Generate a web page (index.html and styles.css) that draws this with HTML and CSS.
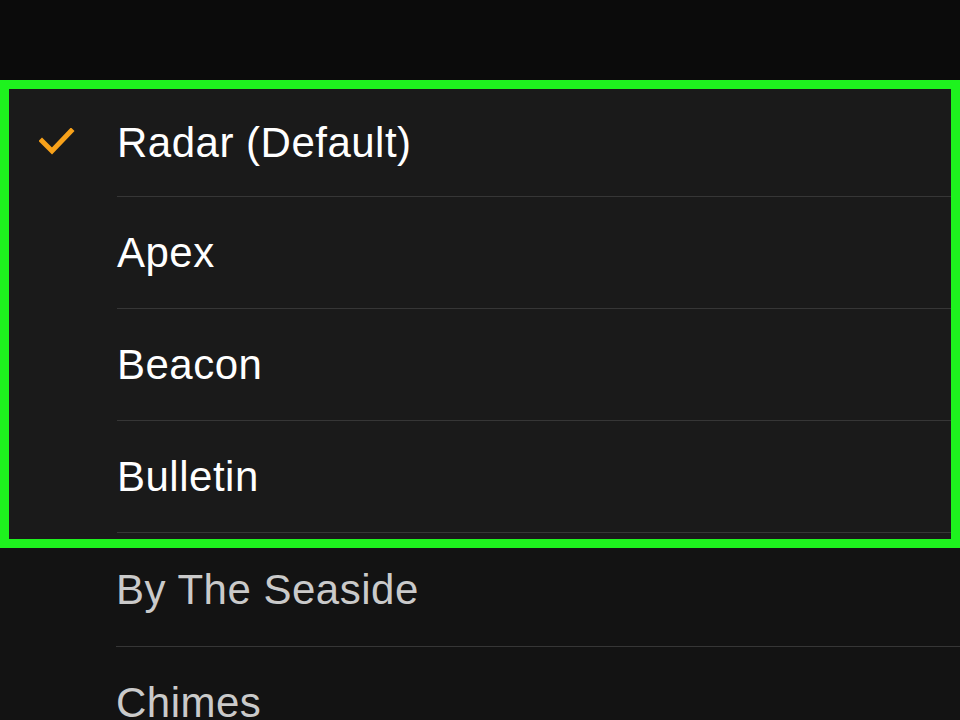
FILE: index.html
```html
<!DOCTYPE html>
<html lang="en">
<head>
    <meta http-equiv="Content-Type" content="text/html; charset=UTF-8">
    <meta name="viewport" content="width=device-width, initial-scale=1.0">
    <title>Ringtones</title>
    <link rel="stylesheet" href="styles.css">
</head>
<body>
    <div class="topbar"></div>
    <div class="highlight">
        <div class="row row-first">
            <div class="row-icon">
                <svg width="36" height="30" viewBox="0 0 36 30">
                    <polyline points="3,13 13,23 32,3" fill="none" stroke="#f7a11a" stroke-width="5" stroke-linecap="square" stroke-linejoin="miter" />
                </svg>
            </div>
            <div class="row-label">Radar (Default)</div>
        </div>
        <div class="row">
            <div class="row-icon"></div>
            <div class="row-label">Apex</div>
        </div>
        <div class="row">
            <div class="row-icon"></div>
            <div class="row-label">Beacon</div>
        </div>
        <div class="row">
            <div class="row-icon"></div>
            <div class="row-label">Bulletin</div>
        </div>
    </div>
    <div class="list-dim">
        <div class="row row-after">
            <div class="row-icon"></div>
            <div class="row-label">By The Seaside</div>
        </div>
        <div class="row">
            <div class="row-icon"></div>
            <div class="row-label">Chimes</div>
        </div>
    </div>
</body>
</html>
```

FILE: styles.css
```css
body {
    font-family: "Liberation Sans", Arial, sans-serif;
    background-color: #131313;
    margin: 0;
    height: 720px;
    overflow: hidden;
}

.topbar {
    height: 80px;
    background-color: #0b0b0b;
}

.highlight {
    border: 9px solid #1ef21e;
    background-color: #1a1a1a;
    height: 450px;
    width: 942px;
}

.row {
    display: flex;
    height: 112px;
    color: #fff;
    font-size: 42px;
    letter-spacing: 0.5px;
}

.row-first {
    height: 108px;
}

.row-icon {
    width: 108px;
    display: flex;
    align-items: center;
    padding-left: 30px;
    box-sizing: border-box;
}

.row-label {
    flex: 1;
    display: flex;
    align-items: center;
    border-bottom: 1px solid #363636;
}

.list-dim .row {
    color: #cacaca;
}

.list-dim .row-icon {
    width: 116px;
}

.list-dim .row-after {
    height: 99px;
}

.list-dim .row-after .row-label {
    padding-bottom: 14px;
}
```
